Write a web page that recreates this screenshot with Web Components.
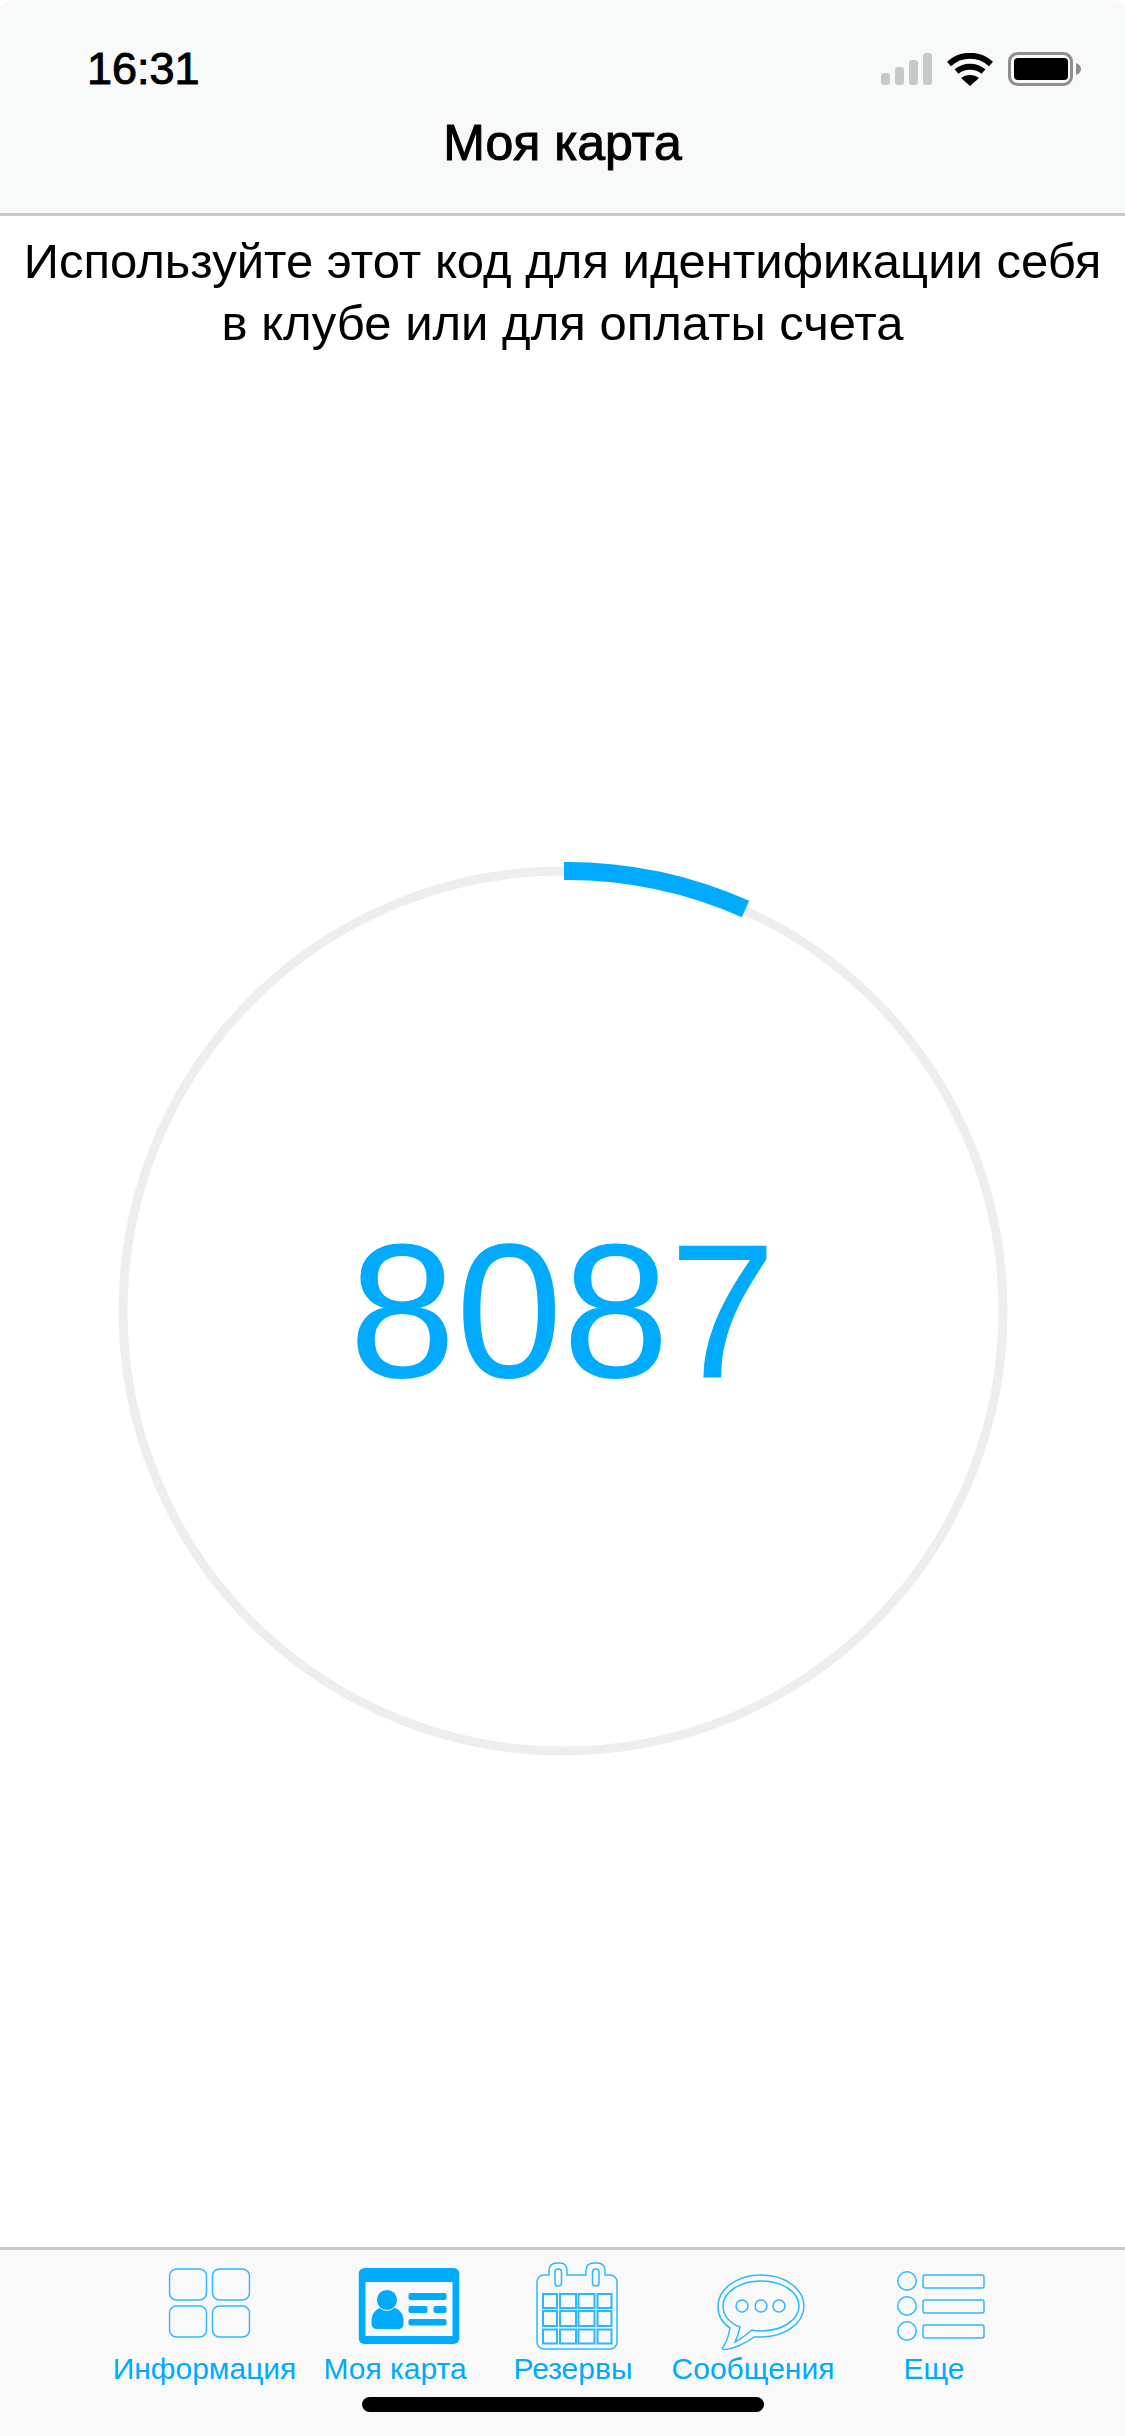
<!DOCTYPE html>
<html lang="ru">
<head>
<meta charset="utf-8">
<title>Моя карта</title>
<style>
  html, body { margin: 0; height: 100%; background: #fff; }
  body { font-family: "Liberation Sans", Arial, sans-serif; }
</style>
</head>
<body>
<template id="phone-screen-tpl">
  <style>
    :host { display: flex; flex-direction: column; width: 1125px; height: 2436px; background: #fff; overflow: hidden; }
    ::slotted(card-code) { flex: 1; }
  </style>
  <slot></slot>
</template>

<template id="status-header-tpl">
  <style>
    :host { display: block; height: 213px; background: #f8f9f9; border-bottom: 3px solid #cbcbcb; border-radius: 12px 12px 0 0; color: #000; }
    .status { display: flex; align-items: center; justify-content: space-between; height: 68px; padding: 35px 0 0 87px; }
    .time { font-size: 45px; -webkit-text-stroke: 1px #000; line-height: 68px; }
    .icons { display: flex; align-items: center; gap: 15px; margin-right: 44px; }
    svg { display: block; }
    h1 { margin: 0; text-align: center; font-size: 50px; font-weight: 400; -webkit-text-stroke: 1px #000; line-height: 56px; padding-top: 12px; }
  </style>
  <div class="status">
    <span class="time">16:31</span>
    <div class="icons">
      <svg width="51" height="32" viewBox="0 0 51 32">
        <rect x="0" y="20" width="9" height="12" rx="3" fill="#c7c9c9"/>
        <rect x="14" y="14" width="9" height="18" rx="3" fill="#c7c9c9"/>
        <rect x="28" y="7" width="9" height="25" rx="3" fill="#c7c9c9"/>
        <rect x="42" y="0" width="9" height="32" rx="3" fill="#c7c9c9"/>
      </svg>
      <svg width="46" height="33" viewBox="0 0 46 33">
        <path d="M2 11 C14 0 32 0 44 11" fill="none" stroke="#000" stroke-width="6"/>
        <path d="M9.500 18.500 C17 12 29 12 36.500 18.500" fill="none" stroke="#000" stroke-width="6"/>
        <path d="M23 33 L14 25 C19 21 27 21 32 25 Z" fill="#000"/>
      </svg>
      <svg width="73" height="34" viewBox="0 0 73 34">
        <rect x="1.500" y="1.500" width="62" height="31" rx="8" fill="none" stroke="#8e8e8e" stroke-width="3"/>
        <rect x="6" y="6" width="54" height="22" rx="4" fill="#000"/>
        <path d="M68 11 C71 12 73 14 73 17 C73 20 71 22 68 23 Z" fill="#8e8e8e"/>
      </svg>
    </div>
  </div>
  <h1><slot></slot></h1>
</template>

<template id="card-code-tpl">
  <style>
    :host { display: flex; flex-direction: column; align-items: center; color: #000; }
    p { margin: 0; padding-top: 14px; width: 1115px; text-align: center; font-size: 49px; line-height: 62px; }
    .ring { display: grid; place-items: center; margin-top: 507px; width: 899px; height: 899px; }
    .ring > * { grid-area: 1 / 1; }
    .num { font-size: 192px; line-height: 1; color: #00aaff; }
    svg { display: block; }
  </style>
  <p><slot></slot></p>
  <div class="ring">
    <svg width="899" height="899" viewBox="0 0 899 899">
      <circle cx="450" cy="450" r="440" fill="none" stroke="#eeeeee" stroke-width="9"/>
      <path d="M451 10 A440 440 0 0 1 632.500 48" fill="none" stroke="#00aaff" stroke-width="18"/>
    </svg>
    <span class="num"><slot name="code"></slot></span>
  </div>
</template>

<template id="tab-bar-tpl">
  <style>
    :host { display: block; height: 186px; background: #f9f9f9; border-top: 3px solid #cbcbcb; position: relative; }
    .tabs { display: grid; grid-template-columns: 183px 198px 158px 202px 160px; padding-left: 113px; }
    .home { position: absolute; left: 362px; top: 147px; width: 402px; height: 15px; border-radius: 8px; background: #000; }
  </style>
  <div class="tabs"><slot></slot></div>
  <div class="home"></div>
</template>

<template id="tab-item-tpl">
  <style>
    :host { display: flex; flex-direction: column; align-items: center; height: 146px; color: #00aaff; }
    .icon { height: 102px; display: flex; align-items: flex-start; transform: translateX(var(--shift, 0)); }
    .icon ::slotted(svg) { display: block; margin-top: var(--top, 0); }
    .label { font-size: 30px; line-height: 34px; white-space: nowrap; }
  </style>
  <div class="icon"><slot name="icon"></slot></div>
  <div class="label"><slot></slot></div>
</template>

<phone-screen>
  <status-header>Моя карта</status-header>
  <card-code>
    Используйте этот код для идентификации себя<br>в клубе или для оплаты счета
    <span slot="code">8087</span>
  </card-code>
  <tab-bar>
    <tab-item style="--shift:4.500px;--top:18px">
      <svg slot="icon" width="82" height="70" viewBox="0 0 82 70" fill="none" stroke="#2cb8ff" stroke-width="1.500">
        <rect x="1" y="1" width="37" height="31" rx="7"/>
        <rect x="44" y="1" width="37" height="31" rx="7"/>
        <rect x="1" y="38" width="37" height="31" rx="7"/>
        <rect x="44" y="38" width="37" height="31" rx="7"/>
      </svg>
      Информация
    </tab-item>
    <tab-item style="--shift:13.500px;--top:18px">
      <svg slot="icon" width="101" height="76" viewBox="0 0 101 76">
        <rect width="101" height="76" rx="6" fill="#00aaff"/>
        <rect x="7" y="14" width="87" height="54" fill="#f9f9f9"/>
        <path d="M13 53 C13 45 18 40 25 39 H33 C40 40 45 45 45 53 V55 C45 59 43 61 39 61 H19 C15 61 13 59 13 55 Z" fill="#00aaff"/>
        <circle cx="28.500" cy="32" r="10.500" fill="#00aaff" stroke="#f9f9f9" stroke-width="1"/>
        <rect x="50" y="25" width="38" height="7" rx="2" fill="#00aaff"/>
        <rect x="50" y="38" width="19" height="7" rx="2" fill="#00aaff"/>
        <rect x="75" y="38" width="13" height="7" rx="2" fill="#00aaff"/>
        <rect x="50" y="51" width="38" height="6.500" rx="2" fill="#00aaff"/>
      </svg>
      Моя карта
    </tab-item>
    <tab-item style="--shift:4px;--top:12px">
      <svg slot="icon" width="82" height="88" viewBox="0 0 82 88" fill="none" stroke="#2cb8ff" stroke-width="1.500">
        <path d="M1 20 C1 16 4 13 8 13 H13 V9 C13 4 16 1 21 1 H24 C29 1 31 4 31 9 V13 H50 V9 C50 4 53 1 58 1 H61 C66 1 69 4 69 9 V13 H74 C78 13 81 16 81 20 V80 C81 84 78 87 74 87 H8 C4 87 1 84 1 80 Z"/>
        <rect x="19" y="7" width="6.500" height="17" rx="3"/>
        <rect x="56.500" y="7" width="6.500" height="17" rx="3"/>
        <g stroke-width="2">
          <rect x="7" y="32" width="14" height="14"/><rect x="24" y="32" width="16" height="14"/><rect x="42.500" y="32" width="16" height="14"/><rect x="61.500" y="32" width="14" height="14"/>
          <rect x="7" y="49" width="14" height="15"/><rect x="24" y="49" width="16" height="15"/><rect x="42.500" y="49" width="16" height="15"/><rect x="61.500" y="49" width="14" height="15"/>
          <rect x="7" y="67.500" width="14" height="14"/><rect x="24" y="67.500" width="16" height="14"/><rect x="42.500" y="67.500" width="16" height="14"/><rect x="61.500" y="67.500" width="14" height="14"/>
        </g>
      </svg>
      Резервы
    </tab-item>
    <tab-item style="--shift:8px;--top:24px">
      <svg slot="icon" width="88" height="76" viewBox="0 0 88 76" fill="none" stroke="#2cb8ff" stroke-width="1.500">
        <path d="M37 63 C28 70 15 75 7 75.500 C5 75.500 5 74 6 73 C10 68 12 60 13 54 C5 49 1 41 1 32 C1 15 20 1 44 1 C68 1 87 15 87 32 C87 49 68 63 44 63 C42 63 39 63 37 63 Z"/>
        <path d="M35 56 C29 61 24 65 18 68 C20 64 22 58 23 53 C12 49 6 41 6 32 C6 18 23 7 44 7 C65 7 82 18 82 32 C82 46 65 57 44 57 C41 57 38 57 35 56 Z"/>
        <circle cx="25" cy="32" r="6"/><circle cx="44" cy="32" r="6"/><circle cx="62" cy="32" r="6"/>
      </svg>
      Сообщения
    </tab-item>
    <tab-item style="--shift:7px;--top:21px">
      <svg slot="icon" width="88" height="70" viewBox="0 0 88 70" fill="none" stroke="#2cb8ff" stroke-width="1.500">
        <circle cx="10" cy="10" r="9.200"/><circle cx="10" cy="35" r="9.200"/><circle cx="10" cy="60" r="9.200"/>
        <rect x="26" y="4" width="61" height="13" rx="2"/><rect x="26" y="29" width="61" height="13" rx="2"/><rect x="26" y="54" width="61" height="13" rx="2"/>
      </svg>
      Еще
    </tab-item>
  </tab-bar>
</phone-screen>
<script>
  // every element clones its own template by id
  function define(tag) {
    const template = document.getElementById(tag + "-tpl");
    customElements.define(tag, class extends HTMLElement {
      constructor() {
        super();
        this.attachShadow({ mode: "open" });
        this.shadowRoot.appendChild(template.content.cloneNode(true));
      }
    });
  }
  ["phone-screen", "status-header", "card-code", "tab-bar", "tab-item"].forEach(define);
</script>
</body>
</html>
